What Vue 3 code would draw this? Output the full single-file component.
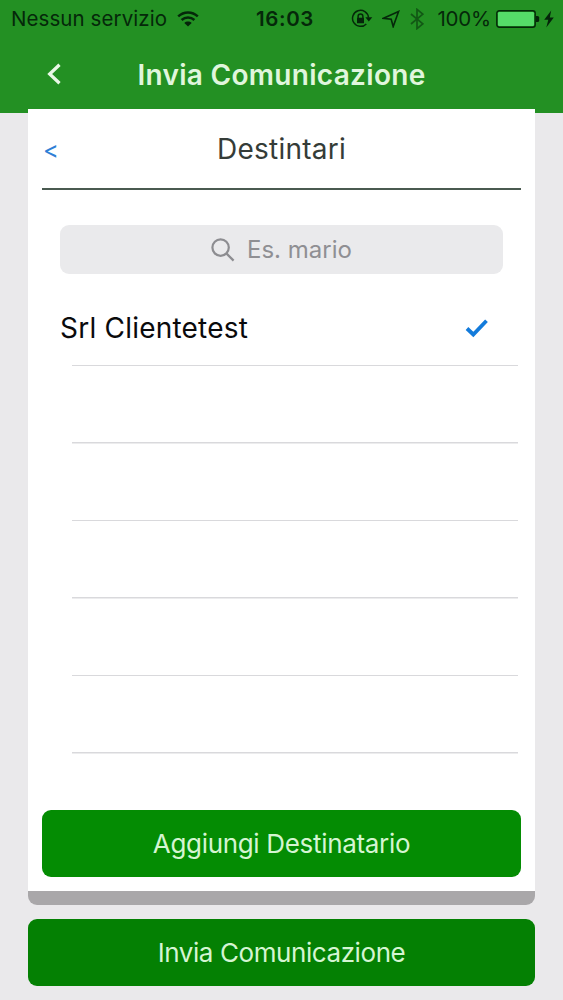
<template>
  <div class="screen">
    <header class="top">
      <div class="status-bar">
        <div class="status-left">
          <span class="carrier">Nessun servizio</span>
          <svg class="wifi" viewBox="0 0 22 16" width="22" height="16">
            <path d="M1.2 5.4C6.8.2 15.2.2 20.8 5.4" />
            <path d="M4.6 9C8.3 5.600 13.700 5.600 17.400 9" />
            <path class="solid" d="M11 15.600L7.300 11.900C9.400 10.100 12.600 10.100 14.700 11.900Z" />
          </svg>
        </div>
        <span class="clock">16:03</span>
        <div class="status-right">
          <svg class="lock" viewBox="0 0 22 20" width="22" height="20">
            <path d="M15.300 14.900A8 8 0 1 1 17.500 8.600" />
            <path class="solid" d="M14.300 8.300H21.300L17.800 12.500Z" />
            <path d="M7.100 9.500V7.400a2.400 2.400 0 0 1 4.800 0v2.100" />
            <rect class="solid" x="6" y="8.700" width="7" height="5.600" rx=".6" />
          </svg>
          <svg class="arrow" viewBox="0 0 18 18" width="18" height="18">
            <path d="M16.600 1.400L1.500 8.300L9.200 9.200L11.200 16.600Z" />
          </svg>
          <svg class="bluetooth" viewBox="0 0 14 22" width="14" height="22">
            <path d="M1 6L12.800 15.800L7 20.600V1.400L12.800 6.200L1 16" />
          </svg>
          <span class="percent">100%</span>
          <svg class="battery" viewBox="0 0 44 18" width="44" height="18">
            <rect class="shell" x=".8" y=".8" width="38.400" height="16.400" rx="2.500" />
            <rect class="charge" x="2" y="2" width="36" height="14" rx="1.300" />
            <path class="solid" d="M40 6h1.500q1.700 0 1.700 1.600v2.800q0 1.600-1.700 1.600H40Z" />
          </svg>
          <svg class="bolt" viewBox="0 0 10 18" width="10" height="18">
            <path class="solid" d="M7.200.5L.2 9.800H4.300L2.300 17.500L9.800 7.500H5.800Z" />
          </svg>
        </div>
      </div>

      <nav class="nav-bar">
        <button class="nav-back" aria-label="Indietro">
          <svg viewBox="0 0 16 22" width="16" height="22">
            <path d="M13.500 1.800L3.700 11L13.500 20.200" />
          </svg>
        </button>
        <h1>Invia Comunicazione</h1>
      </nav>
    </header>

    <main class="content">
      <section class="card">
        <div class="card-header">
          <button class="card-back">&lt;</button>
          <h2>Destintari</h2>
        </div>

        <label class="search" @click="searchInput.focus()">
          <svg viewBox="0 0 24 24" width="24" height="24">
            <circle cx="9.600" cy="9.600" r="8.200" />
            <path d="M15.600 15.600L22.600 22.600" />
          </svg>
          <input ref="searchInput" v-model="search" type="text" placeholder="Es. mario" />
        </label>

        <ul class="list">
          <li v-for="(row, i) in rows" :key="i" @click="toggle(row)">
            <span class="name">{{ row.name }}</span>
            <svg v-if="row.selected" class="check" viewBox="0 0 24 20" width="24" height="20">
              <path d="M2 10.500L8.300 16.500L21.500 2.800" />
            </svg>
          </li>
        </ul>

        <button class="btn btn-add"><span>Aggiungi Destinatario</span></button>
      </section>

      <button class="btn btn-send"><span>Invia Comunicazione</span></button>
    </main>
  </div>
</template>

<script setup>
import { ref } from 'vue';

const search = ref('');
const searchInput = ref(null);

const rows = ref([
  { name: 'Srl Clientetest', selected: true },
  { name: '' },
  { name: '' },
  { name: '' },
  { name: '' },
  { name: '' },
]);

const toggle = (row) => {
  if (row.name) row.selected = !row.selected;
};
</script>

<style>
body {
  margin: 0;
  background: #eae9eb;
}
</style>

<style scoped>
.screen {
  width: 563px;
  height: 1000px;
  overflow: hidden;
  background: #eae9eb;
  font-family: Inter, "Liberation Sans", sans-serif;
}

button {
  border: none;
  background: none;
  padding: 0;
  font-family: inherit;
  cursor: pointer;
}

svg {
  display: block;
  flex: none;
  fill: none;
}

.solid {
  fill: #05240a;
  stroke: none;
}

.top {
  height: 113px;
  background: #239023;
}

.status-bar {
  display: grid;
  grid-template-columns: 1fr auto 1fr;
  align-items: center;
  height: 37px;
  padding: 0 9px 0 11px;
  color: #05280a;
  font-size: 20.500px;
  stroke: #05280a;
}

.status-left,
.status-right {
  display: flex;
  align-items: center;
}

.status-right {
  justify-content: flex-end;
}

.carrier {
  letter-spacing: 0.080px;
}

.wifi {
  margin-left: 10px;
  stroke-width: 2.500;
}

.clock {
  padding-left: 5px;
  font-weight: 600;
  letter-spacing: 0.600px;
}

.lock {
  stroke-width: 1.500;
}

.arrow {
  margin-left: 9px;
  stroke-width: 1.600;
}

.bluetooth {
  margin-left: 10px;
  stroke: #125815;
  stroke-width: 1.700;
}

.percent {
  margin-left: 13px;
  letter-spacing: -0.200px;
}

.battery {
  margin-left: 5px;
}

.shell {
  stroke-width: 1.400;
}

.charge {
  fill: #55dc68;
  stroke: none;
}

.bolt {
  margin-left: 4px;
}

.nav-bar {
  display: grid;
  grid-template-columns: 70px 1fr 70px;
  align-items: center;
  height: 74px;
}

.nav-back {
  padding-left: 46px;
}

.nav-back svg {
  stroke: #e9f8e6;
  stroke-width: 3.300;
}

h1,
h2 {
  margin: 0;
  text-align: center;
  white-space: nowrap;
}

.nav-bar h1 {
  padding-top: 1px;
  color: #e0f6dd;
  font-size: 28px;
  font-weight: 600;
  letter-spacing: 0.300px;
}

.content {
  margin: -4px 28px 0;
}

.card {
  position: relative;
  display: flex;
  flex-direction: column;
  height: 782px;
  padding: 0 14px;
  background: #fff;
  border-bottom: 14px solid #a9a7a9;
  border-radius: 0 0 9px 9px;
}

.card-header {
  display: grid;
  grid-template-columns: 40px 1fr 40px;
  align-items: center;
  height: 79px;
  border-bottom: 2px solid #4a5a50;
}

.card-back {
  padding: 2px 0 0 1px;
  color: #2f7fd6;
  font-size: 24px;
  text-align: left;
}

.card-header h2 {
  color: #353c38;
  font-size: 28px;
  font-weight: 400;
  letter-spacing: 0.250px;
}

.search {
  display: flex;
  align-items: center;
  justify-content: center;
  gap: 12px;
  height: 49px;
  margin: 35px 18px 0;
  border-radius: 9px;
  background: #eaeaec;
}

.search svg {
  stroke: #8d8d91;
  stroke-width: 2.200;
}

.search input {
  width: 105px;
  padding: 0;
  border: none;
  outline: none;
  background: none;
  color: #333;
  font-family: inherit;
  font-size: 24px;
}

.search input::placeholder {
  color: #8f8f93;
  opacity: 1;
}

.list {
  margin: 14.500px 3px 0 18px;
  padding: 0;
  list-style: none;
}

.list li {
  display: flex;
  align-items: center;
  justify-content: space-between;
  box-sizing: border-box;
  height: 77.500px;
  padding: 1px 29px 0 0;
  /* separator starts 12px in from the row text */
  background: linear-gradient(#d9d9dc, #d9d9dc) 12px 100% / 100% 1.500px no-repeat;
}

.name {
  color: #0a0a0c;
  font-size: 28px;
  letter-spacing: 0.220px;
}

.check {
  stroke: #137bdb;
  stroke-width: 3.800;
}

.btn {
  display: block;
  width: 100%;
  height: 67px;
  border-radius: 9px;
  color: #d5f5d2;
  font-size: 26px;
}

.btn-add {
  margin-top: auto;
  margin-bottom: 14px;
  background: #048c03;
  letter-spacing: -0.320px;
}

.btn-send {
  margin-top: 14px;
  background: #048003;
  letter-spacing: -0.420px;
}
</style>
